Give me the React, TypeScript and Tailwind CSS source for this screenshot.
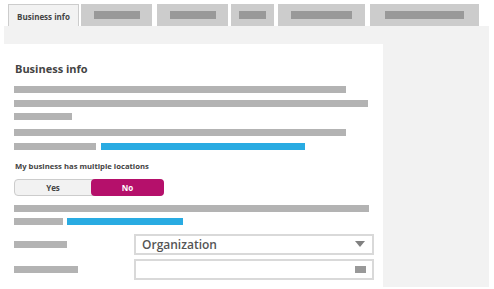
const font = { fontFamily: '"Open Sans", "Noto Sans", sans-serif' };

function Bar({ w, className = '' }: { w: string; className?: string }) {
  return <div className={`h-[7px] bg-[#b3b3b3] ${w} ${className}`} />;
}

function Tab({ w, bar, ml }: { w: string; bar: string; ml: string }) {
  return (
    <div className={`h-[22px] bg-[#cccccc] flex items-start justify-center pt-[7px] ${w} ${ml}`}>
      <div className={`h-[8px] bg-[#999999] ${bar}`} />
    </div>
  );
}

export default function App() {
  return (
    <div className="w-[494px] h-[289px] bg-white overflow-hidden text-[#444]" style={font}>
      <div className="flex items-end h-[26px] pl-[8px]">
        <div className="w-[71px] h-[22px] bg-[#f2f2f2] border border-b-0 border-[#cccccc] flex items-center justify-center pt-[2px] text-[8px] font-bold">
          Business info
        </div>
        <Tab w="w-[71px]" bar="w-[46px]" ml="ml-[2px]" />
        <Tab w="w-[71px]" bar="w-[46px]" ml="ml-[5px]" />
        <Tab w="w-[43px]" bar="w-[27px]" ml="ml-[3px]" />
        <Tab w="w-[87px]" bar="w-[61px]" ml="ml-[4px]" />
        <Tab w="w-[109px]" bar="w-[79px]" ml="ml-[5px]" />
      </div>
      <div className="ml-[4px] w-[485px] h-[261px] bg-[#f2f2f2] pt-[18px]">
        <div className="w-[379px] h-[243px] bg-white pl-[10px]">
          <h2 className="pt-[17px] h-[34px] text-[11px] leading-[16px] font-bold pl-[1px]">Business info</h2>
          <Bar w="w-[332px]" className="mt-[8px]" />
          <Bar w="w-[354px]" className="mt-[7px]" />
          <Bar w="w-[58px]" className="mt-[6px]" />
          <Bar w="w-[332px]" className="mt-[9px]" />
          <div className="flex gap-[5px] mt-[7px]">
            <Bar w="w-[82px]" />
            <div className="h-[7px] w-[204px] bg-[#29abe2]" />
          </div>
          <div className="mt-[9px] h-[14px] text-[7.7px] leading-[14px] font-bold pl-[1px]">
            My business has multiple locations
          </div>
          <div className="mt-[6px] flex w-[150px] h-[17px] rounded-[4px] border border-[#cccccc] bg-[#f2f2f2] text-[8px] font-bold">
            <div className="w-[76px] flex items-center justify-center">Yes</div>
            <div className="flex-1 flex items-center justify-center bg-[#b5106b] text-white rounded-[4px] -my-px -mr-px">No</div>
          </div>
          <Bar w="w-[355px]" className="mt-[9px]" />
          <div className="flex gap-[4px] mt-[6px]">
            <Bar w="w-[49px]" />
            <div className="h-[7px] w-[116px] bg-[#29abe2]" />
          </div>
          <div className="flex items-center mt-[9px] h-[21px]">
            <Bar w="w-[53px]" />
            <div className="ml-[67px] w-[240px] h-[21px] border-2 border-[#d9d9d9] flex items-center justify-between pl-[6px] pr-[7px]">
              <span className="text-[12px] leading-[16px] text-[#555] font-semibold">Organization</span>
              <svg width="10" height="7" viewBox="0 0 10 7">
                <polygon points="0,0 10,0 5,6" fill="#808080" />
              </svg>
            </div>
          </div>
          <div className="flex items-center mt-[4px] h-[21px]">
            <Bar w="w-[64px]" />
            <div className="ml-[56px] w-[240px] h-[21px] border-2 border-[#d9d9d9] flex items-center justify-end pr-[6px]">
              <div className="w-[11px] h-[7px] bg-[#999999]" />
            </div>
          </div>
        </div>
      </div>
    </div>
  );
}
